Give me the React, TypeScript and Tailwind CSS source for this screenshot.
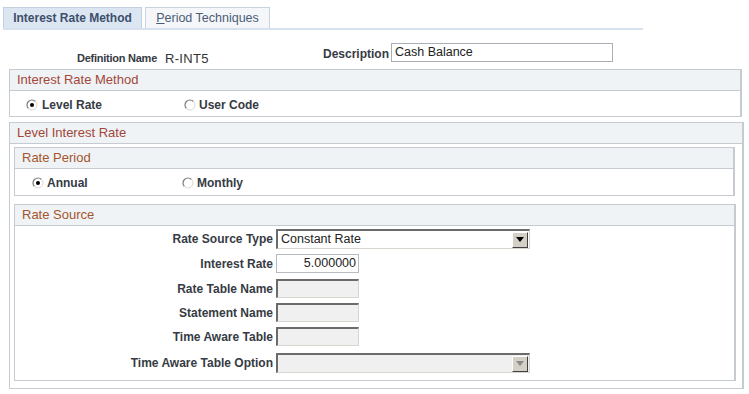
import React from 'react';

function Radio({ checked }: { checked?: boolean }) {
  return (
    <svg width="12" height="12" viewBox="0 0 12 12" className="shrink-0">
      <circle cx="6" cy="6" r="5" fill="#ffffff" />
      <path d="M2.46 9.54 A5 5 0 0 1 9.54 2.46" fill="none" stroke="#7a7a7a" strokeWidth="1.2" />
      <path d="M9.54 2.46 A5 5 0 0 1 2.46 9.54" fill="none" stroke="#dcdad4" strokeWidth="1" />
      {checked && <circle cx="6" cy="6" r="2" fill="#000000" />}
    </svg>
  );
}

function Box({
  title,
  tone = 'outer',
  className,
  children,
}: {
  title: string;
  tone?: 'outer' | 'inner';
  className: string;
  children?: React.ReactNode;
}) {
  return (
    <div className={`flex flex-col border border-[#c6cbd1] border-r-2 bg-white ${className}`}>
      <div className="flex h-[21px] shrink-0 items-center border-b border-[#c6cbd1] bg-[#eff3f5] pl-[7px] text-[13px]">
        <span className={tone === 'outer' ? 'text-[#a2473a]' : 'text-[#a4552e]'}>{title}</span>
      </div>
      {children}
    </div>
  );
}

function SelectBox({ value, disabled }: { value?: string; disabled?: boolean }) {
  return (
    <div
      className={`flex h-[20px] w-[254px] items-center border-t-2 border-l-2 border-b border-r border-t-[#6b6b6b] border-l-[#6b6b6b] border-b-[#d8d5ce] border-r-[#d8d5ce] ${
        disabled ? 'bg-[#f0f0f0]' : 'bg-white'
      }`}
    >
      <span className="flex-1 pl-[3px] text-[12.5px] text-[#222]">{value}</span>
      <div className="mr-[1px] flex h-[16px] w-[16px] items-center justify-center border border-t-white border-l-white border-b-[#404040] border-r-[#404040] bg-[#d4d0c8]">
        <svg width="8" height="5" viewBox="0 0 8 5">
          <path d="M0 0h8L4 5z" fill={disabled ? '#8a8a8a' : '#000000'} />
        </svg>
      </div>
    </div>
  );
}

function DisabledInput() {
  return (
    <div className="h-[19px] w-[83px] border-t-2 border-l-2 border-b border-r border-t-[#6b6b6b] border-l-[#6b6b6b] border-b-[#d8d5ce] border-r-[#d8d5ce] bg-[#f0f0f0]" />
  );
}

function FieldRow({
  label,
  className,
  children,
}: {
  label: string;
  className: string;
  children: React.ReactNode;
}) {
  return (
    <div className={`flex items-center gap-[3px] ${className}`}>
      <span className="w-[258px] text-right text-[12px] font-bold text-[#363b44]">{label}</span>
      {children}
    </div>
  );
}

export default function App() {
  return (
    <div className="h-[394px] w-[749px] overflow-hidden bg-white font-['Liberation_Sans',Arial,sans-serif] text-[#363b44]">
      {/* tabs */}
      <div className="ml-[3px] mt-[7px] flex items-end gap-[3px]">
        <div className="flex h-[21px] w-[139px] items-center justify-center border border-b-0 border-[#c2d0e0] bg-[#dce6f2] text-[12px] font-bold text-[#3c4f6c]">
          Interest Rate Method
        </div>
        <div className="flex h-[21px] w-[125px] items-center justify-center border border-b-0 border-[#c9d3de] bg-[#f4f6f9] text-[12.5px] text-[#4b5d76]">
          <span>
            <span className="underline">P</span>eriod Techniques
          </span>
        </div>
      </div>
      <div className="ml-[3px] h-[2px] w-[640px] bg-[#d6e2ef]" />

      {/* definition header */}
      <div className="mt-[12px] flex h-[21px] items-start">
        <span className="mt-[8px] w-[157px] text-right text-[11px] font-bold tracking-[-0.25px]">Definition Name</span>
        <div className="flex w-[232px] items-start justify-between pl-[8px]">
          <span className="mt-[7px] text-[13px] tracking-[0.3px] text-[#333]">R-INT5</span>
          <span className="mt-[3px] text-[12px] font-bold">Description</span>
        </div>
        <div className="ml-[2px] mt-[1px] flex h-[19px] w-[222px] items-center border border-[#a9afb5] pl-[3px] text-[12.5px] text-[#222]">
          Cash Balance
        </div>
      </div>

      {/* interest rate method */}
      <Box title="Interest Rate Method" className="ml-[9px] mt-[6px] h-[48px] w-[733px]">
        <div className="flex flex-1 items-center pt-[3px] text-[12px] font-bold">
          <div className="ml-[16px] flex w-[158px] items-center gap-[4px]">
            <Radio checked />
            <span>Level Rate</span>
          </div>
          <div className="flex items-center gap-[3px]">
            <Radio />
            <span>User Code</span>
          </div>
        </div>
      </Box>

      {/* level interest rate */}
      <Box title="Level Interest Rate" className="ml-[9px] mt-[5px] h-[267px] w-[735px]">
        <Box title="Rate Period" tone="inner" className="ml-[4px] mt-[3px] h-[49px] w-[721px]">
          <div className="flex flex-1 items-center pt-[2px] text-[12px] font-bold">
            <div className="ml-[17px] flex w-[150px] items-center gap-[3px]">
              <Radio checked />
              <span>Annual</span>
            </div>
            <div className="flex items-center gap-[3px]">
              <Radio />
              <span>Monthly</span>
            </div>
          </div>
        </Box>
        <Box title="Rate Source" tone="inner" className="ml-[4px] mt-[8px] h-[177px] w-[722px]">
          <FieldRow label="Rate Source Type" className="mt-[3px] h-[20px]">
            <SelectBox value="Constant Rate" />
          </FieldRow>
          <FieldRow label="Interest Rate" className="mt-[5px] h-[19px]">
            <div className="flex h-[19px] w-[83px] items-center justify-end border border-[#b7bcc2] pr-[2px] text-[12.5px] text-[#222]">
              5.000000
            </div>
          </FieldRow>
          <FieldRow label="Rate Table Name" className="mt-[6px] h-[19px]">
            <DisabledInput />
          </FieldRow>
          <FieldRow label="Statement Name" className="mt-[5px] h-[19px]">
            <DisabledInput />
          </FieldRow>
          <FieldRow label="Time Aware Table" className="mt-[5px] h-[19px]">
            <DisabledInput />
          </FieldRow>
          <FieldRow label="Time Aware Table Option" className="mt-[7px] h-[20px]">
            <SelectBox disabled />
          </FieldRow>
        </Box>
      </Box>
    </div>
  );
}
